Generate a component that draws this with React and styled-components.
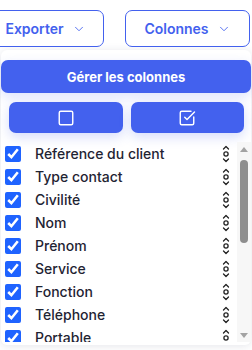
import React from "react";
import styled, { createGlobalStyle } from "styled-components";
import { ChevronDown, Square, SquareCheckBig } from "lucide-react";

const Global = createGlobalStyle`
  html, body { margin: 0; padding: 0; background: #ffffff; }
  body { font-family: Inter, "Noto Sans", sans-serif; }
  * { box-sizing: border-box; }
`;

const Page = styled.div`
  width: 252px;
  height: 350px;
  overflow: hidden;
`;

const Toolbar = styled.div`
  display: flex;
  justify-content: flex-end;
  gap: 21px;
  padding: 10px 2px 0 0;
`;

const OutlineButton = styled.button`
  flex: 0 0 auto;
  width: ${(p) => p.$w}px;
  height: 37px;
  display: flex;
  align-items: center;
  justify-content: center;
  gap: 8px;
  background: #fff;
  border: 1px solid #4361ee;
  border-radius: 7px;
  color: #4361ee;
  font-family: Inter, sans-serif;
  font-size: 14px;
  font-weight: 600;
  padding: 0 0 0 ${(p) => p.$shift || 0}px;
`;

const Panel = styled.div`
  margin: 3px 1px 0 1px;
  width: 250px;
  background: #fff;
  border-radius: 6px;
  box-shadow: 0 1px 8px rgba(30, 40, 80, 0.12);
  padding: 10px 0 3px 0;
  display: flex;
  flex-direction: column;
`;

const PrimaryButton = styled.button`
  height: 33px;
  width: 100%;
  border: none;
  border-radius: 7px;
  background: #4361ee;
  color: #fff;
  font-family: Inter, sans-serif;
  font-size: 13px;
  font-weight: 700;
  box-shadow: 0 4px 12px rgba(67, 97, 238, 0.18);
`;

const ButtonRow = styled.div`
  display: grid;
  grid-template-columns: 1fr 1fr;
  gap: 8px;
  padding: 9px 7px 0 8px;
`;

const IconButton = styled.button`
  height: 31px;
  border: none;
  border-radius: 7px;
  background: #4361ee;
  color: #fff;
  display: flex;
  align-items: center;
  justify-content: center;
  box-shadow: 0 4px 12px rgba(67, 97, 238, 0.22);
`;

const ListWrap = styled.div`
  margin-top: 9px;
  height: 200px;
  display: flex;
`;

const Scroller = styled.div`
  flex: 1;
  min-width: 0;
  overflow-y: auto;
  scrollbar-width: none;
  &::-webkit-scrollbar { display: none; }
`;

const ScrollBar = styled.div`
  width: 14px;
  flex: 0 0 14px;
  background: #f7f7f7;
  display: flex;
  flex-direction: column;
  align-items: center;
`;

const ArrowBtn = styled.div`
  height: 14px;
  width: 14px;
  display: flex;
  align-items: center;
  justify-content: center;
  &::before {
    content: "";
    border-left: 4px solid transparent;
    border-right: 4px solid transparent;
    ${(p) => (p.$down ? "border-top: 5px solid #a3a3a3;" : "border-bottom: 5px solid #a3a3a3;")}
  }
`;

const Thumb = styled.div`
  width: 8px;
  border-radius: 4px;
  background: #8e8e8e;
  margin-top: 4px;
`;

const Spacer = styled.div`
  flex: 1;
`;

const Row = styled.label`
  height: 23px;
  display: flex;
  align-items: center;
  padding-left: 4px;
  padding-right: 7px;
`;

const Check = styled.input`
  width: 16px;
  height: 16px;
  margin: 0;
  accent-color: #1f63ff;
  flex: 0 0 auto;
`;

const Label = styled.span`
  flex: 1;
  margin-left: 14px;
  font-size: 14px;
  font-weight: 500;
  color: #1f2433;
  white-space: nowrap;
`;

const Handle = () => (
  <svg width="8" height="18" viewBox="0 0 8 18" fill="none" stroke="#222" strokeWidth="1.3" strokeLinecap="round" strokeLinejoin="round">
    <path d="M1.5 4 L4 1.5 L6.5 4" />
    <circle cx="4" cy="9" r="2.1" />
    <path d="M1.5 14 L4 16.5 L6.5 14" />
  </svg>
);

const columns = [
  "Référence du client",
  "Type contact",
  "Civilité",
  "Nom",
  "Prénom",
  "Service",
  "Fonction",
  "Téléphone",
  "Portable",
  "Fax",
  "Email",
  "Adresse",
  "Code postal",
  "Ville",
  "Pays",
  "Date de création",
  "Commentaire",
  "Statut",
];

export default function App() {
  return (
    <Page>
      <Global />
      <Toolbar>
        <OutlineButton $w={121} $shift={4}>
          Exporter <ChevronDown size={14} strokeWidth={1.5} />
        </OutlineButton>
        <OutlineButton $w={125}>
          Colonnes <ChevronDown size={14} strokeWidth={1.5} />
        </OutlineButton>
      </Toolbar>
      <Panel>
        <PrimaryButton>Gérer les colonnes</PrimaryButton>
        <ButtonRow>
          <IconButton>
            <Square size={18} strokeWidth={1.9} />
          </IconButton>
          <IconButton>
            <SquareCheckBig size={18} strokeWidth={1.9} />
          </IconButton>
        </ButtonRow>
        <ListWrap>
          <Scroller>
            {columns.map((c) => (
              <Row key={c}>
                <Check type="checkbox" defaultChecked />
                <Label>{c}</Label>
                <Handle />
              </Row>
            ))}
          </Scroller>
          <ScrollBar>
            <ArrowBtn />
            <Thumb style={{ height: 83 }} />
            <Spacer />
            <ArrowBtn $down />
          </ScrollBar>
        </ListWrap>
      </Panel>
    </Page>
  );
}
